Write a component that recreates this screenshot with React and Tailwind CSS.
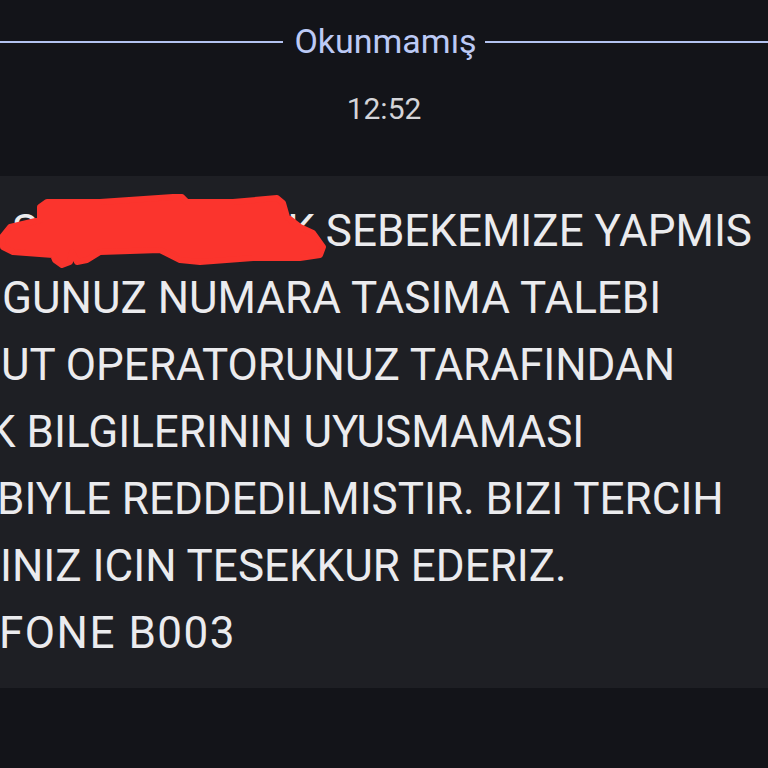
export default function App() {
  const lines = [
    { text: "GUNUZ NUMARA TASIMA TALEBI", cls: "pl-[2px]" },
    { text: "UT OPERATORUNUZ TARAFINDAN", cls: "pl-[1px]" },
    { text: "K BILGILERININ UYUSMAMASI", cls: "-ml-[12px]" },
    { text: "BIYLE REDDEDILMISTIR. BIZI TERCIH", cls: "-ml-[3px]" },
    { text: "INIZ ICIN TESEKKUR EDERIZ.", cls: "pl-0" },
    { text: "FONE B003", cls: "-ml-[1px] tracking-[1.5px]" },
  ];

  const blob =
    "M40 207 L47 202 L100 202 L173 197 L182 197 L187 202 L233 202 L277 198 L283 203 L287 217 L300 227 L313 233 L323 247 L320 255 L300 258 L253 258 L200 262 L180 260 L160 250 L100 252 L87 260 L77 262 L72 252 L70 262 L62 265 L55 260 L53 255 L13 252 L3 247 L2 237 L10 227 L27 223 L40 220 Z";

  return (
    <div className="w-[768px] h-[768px] overflow-hidden bg-[#131419] font-['Roboto',_'Liberation_Sans',_sans-serif]">
      <div className="flex items-center pt-[30px] h-[54px] gap-[8px]">
        <div className="flex-1 h-[2px] bg-[#b3c2f0]" />
        <span className="text-[34px] leading-none text-[#bccaf5] -mt-[2px] pl-[3px]">Okunmamış</span>
        <div className="flex-1 h-[2px] bg-[#b3c2f0]" />
      </div>
      <div className="flex justify-center pt-[40px]">
        <span className="text-[30px] leading-none text-[#d4d4d8]">12:52</span>
      </div>
      <div className="relative mt-[52px] bg-[#1e1f24] h-[512px] pt-[22px] overflow-hidden text-[44px] leading-[67px] text-[#ebebee] whitespace-nowrap">
        <div className="flex justify-between pl-[12px] pr-[16px]">
          <span>S</span>
          <span>K SEBEKEMIZE YAPMIS</span>
        </div>
        {lines.map((l, i) => (
          <div key={i} className={l.cls}>
            {l.text}
          </div>
        ))}
        <svg className="absolute left-0 top-0" width="340" height="100" viewBox="0 176 340 100">
          <path d={blob} fill="#fb342d" stroke="#fb342d" strokeWidth="6" strokeLinejoin="round" />
        </svg>
      </div>
    </div>
  );
}
